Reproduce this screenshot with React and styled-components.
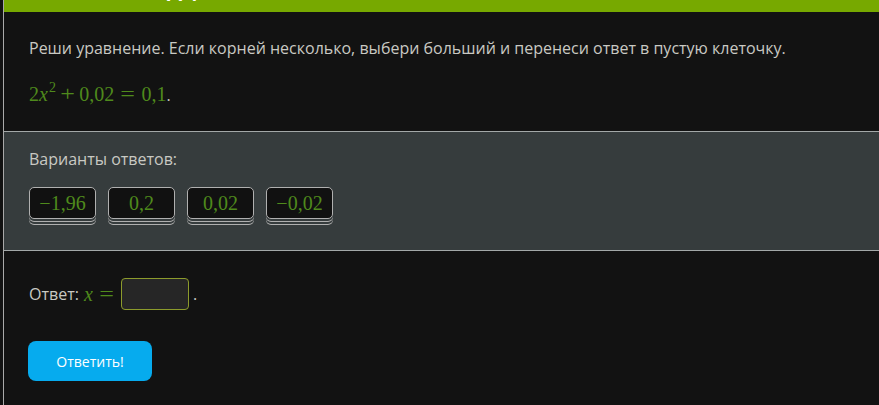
import React from "react";
import styled, { createGlobalStyle } from "styled-components";

const Global = createGlobalStyle`
  html, body { margin: 0; padding: 0; background: #121212; }
  body { font-family: "Open Sans", "Noto Sans", sans-serif; overflow: hidden; }
`;

const Page = styled.div`
  margin-left: 3px;
  border-left: 1px solid #a9a9a9;
  min-height: 405px;
  background: #121212;
`;

const Header = styled.div`
  height: 12px;
  background: #77a900;
  overflow: hidden;
`;

const HeaderTitle = styled.div`
  margin: -20px 0 0 163px;
  font-size: 20px;
  line-height: 20px;
  font-weight: 700;
  color: #ffffff;
`;

const Block = styled.div`
  padding: ${(p) => p.$pad};
`;

const Text = styled.div`
  font-size: 16px;
  line-height: 24px;
  color: #c9c9c3;
`;

const MathLine = styled.div`
  margin-top: 20px;
  font-family: "Liberation Serif", "DejaVu Serif", serif;
  font-size: 20px;
  line-height: 28px;
  color: #4f8a1c;
`;

const Var = styled.span`
  font-style: italic;
`;

const Sup = styled.sup`
  font-size: 14px;
  vertical-align: 9px;
  line-height: 0;
  margin-left: 1px;
`;

const Op = styled.span`
  display: inline-block;
  margin: 0 ${(p) => p.$space || 6}px;
  transform: scaleX(1.3);
`;

const Dot = styled.span`
  font-family: "Open Sans", sans-serif;
  font-size: 16px;
  color: #c9c9c3;
`;

const Variants = styled.div`
  background: #363c3d;
  border-top: 1px solid #a3a8a8;
  border-bottom: 1px solid #a3a8a8;
  padding: 15px 25px 31px;
`;

const Tiles = styled.div`
  display: flex;
  gap: 12px;
  margin-top: 16px;
`;

const Tile = styled.div`
  box-sizing: border-box;
  width: 67px;
  height: 32px;
  border: 1px solid #b0b0b0;
  border-radius: 5px;
  background: #111;
  display: flex;
  align-items: center;
  justify-content: center;
  font-family: "Liberation Serif", "DejaVu Serif", serif;
  font-size: 20px;
  color: #4f8a1c;
  box-shadow: 0 2px 0 0 #363c3d, 0 3px 0 0 #b0b0b0, 0 5px 0 0 #363c3d,
    0 6px 0 0 #b0b0b0;
`;

const AnswerRow = styled.div`
  display: flex;
  align-items: center;
  margin-top: 27px;
  padding-left: 25px;
  height: 32px;
`;

const AnswerMath = styled.span`
  font-family: "Liberation Serif", "DejaVu Serif", serif;
  font-size: 20px;
  color: #4f8a1c;
  margin-left: 5px;
`;

const Input = styled.div`
  box-sizing: border-box;
  width: 68px;
  height: 32px;
  border: 1px solid #8c9b2c;
  border-radius: 4px;
  background: #262626;
  margin-left: 1px;
`;

const Period = styled.span`
  font-size: 16px;
  color: #c9c9c3;
  margin-left: 4px;
`;

const Button = styled.button`
  margin: 31px 0 0 24px;
  width: 124px;
  height: 40px;
  border: none;
  border-radius: 8px;
  background: #06abee;
  color: #fff;
  font-family: "Open Sans", sans-serif;
  font-size: 14px;
`;

const tiles = ["−1,96", "0,2", "0,02", "−0,02"];

export default function App() {
  return (
    <>
      <Global />
      <Page>
        <Header>
          <HeaderTitle>Дц</HeaderTitle>
        </Header>
        <Block $pad="24px 25px 22px">
          <Text>
            Реши уравнение. Если корней несколько, выбери больший и перенеси
            ответ в пустую клеточку.
          </Text>
          <MathLine>
            2<Var>x</Var>
            <Sup>2</Sup>
            <Op>+</Op>0,02<Op $space={8}>=</Op>0,1<Dot>.</Dot>
          </MathLine>
        </Block>
        <Variants>
          <Text>Варианты ответов:</Text>
          <Tiles>
            {tiles.map((t) => (
              <Tile key={t}>{t}</Tile>
            ))}
          </Tiles>
        </Variants>
        <AnswerRow>
          <Text>Ответ:</Text>
          <AnswerMath>
            <Var>x</Var>
            <Op $space={8}>=</Op>
          </AnswerMath>
          <Input />
          <Period>.</Period>
        </AnswerRow>
        <Button>Ответить!</Button>
      </Page>
    </>
  );
}
